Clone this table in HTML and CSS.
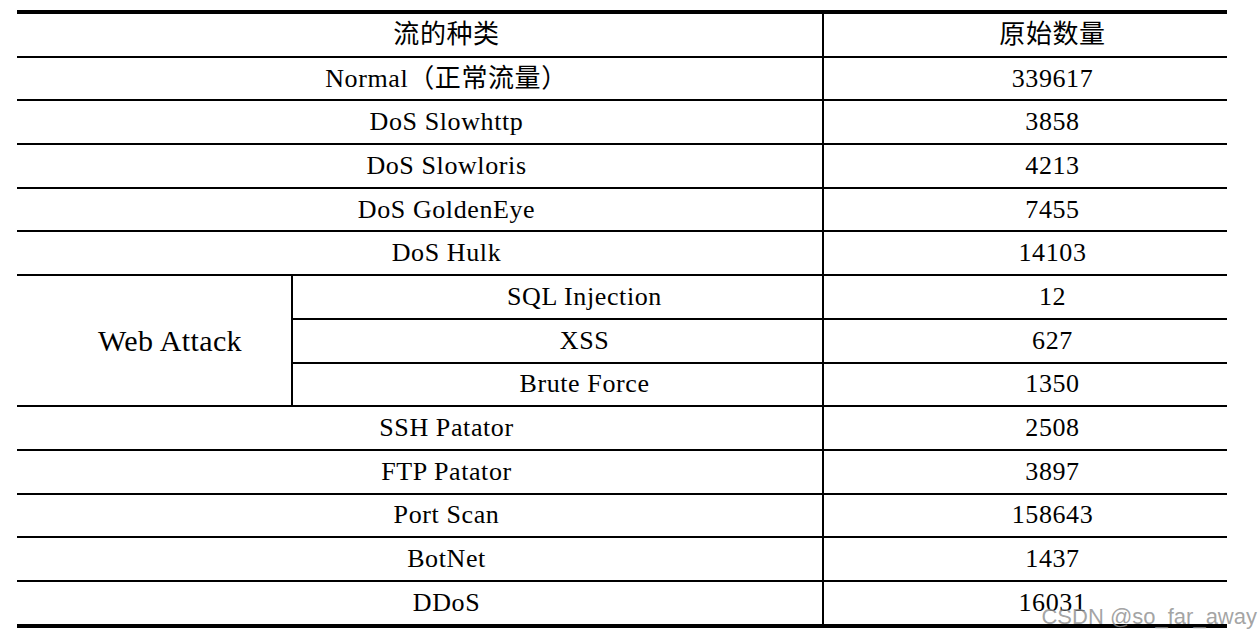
FILE: index.html
```html
<!DOCTYPE html>
<html lang="zh">
<head>
<meta charset="utf-8">
<title>流的种类</title>
<link rel="stylesheet" href="styles.css">
</head>
<body>
<div class="page">
  <div class="grid">
    <div class="cell span2">流的种类</div>
    <div class="cell">原始数量</div>

    <div class="cell span2">Normal（正常流量）</div>
    <div class="cell">339617</div>

    <div class="cell span2">DoS Slowhttp</div>
    <div class="cell">3858</div>

    <div class="cell span2">DoS Slowloris</div>
    <div class="cell">4213</div>

    <div class="cell span2">DoS GoldenEye</div>
    <div class="cell">7455</div>

    <div class="cell span2">DoS Hulk</div>
    <div class="cell">14103</div>

    <div class="cell group">Web Attack</div>
    <div class="cell">SQL Injection</div>
    <div class="cell">12</div>
    <div class="cell">XSS</div>
    <div class="cell">627</div>
    <div class="cell">Brute Force</div>
    <div class="cell">1350</div>

    <div class="cell span2">SSH Patator</div>
    <div class="cell">2508</div>

    <div class="cell span2">FTP Patator</div>
    <div class="cell">3897</div>

    <div class="cell span2">Port Scan</div>
    <div class="cell">158643</div>

    <div class="cell span2">BotNet</div>
    <div class="cell">1437</div>

    <div class="cell span2">DDoS</div>
    <div class="cell">16031</div>
  </div>
  <div class="watermark">CSDN @so_far_away</div>
</div>
</body>
</html>
```

FILE: styles.css
```css
html, body {
  margin: 0;
  padding: 0;
  background: #ffffff;
}

.page {
  position: relative;
  width: 1260px;
  height: 641px;
  padding-top: 10px;
  box-sizing: border-box;
}

.grid {
  margin-left: 17px;
  width: 1210px;
  display: grid;
  grid-template-columns: 274px 529px 403px;
  grid-auto-rows: 41.7px;
  gap: 2px;
  background: #000000;
  border-top: 4px solid #000000;
  border-bottom: 4px solid #000000;
}

.cell {
  background: #ffffff;
  display: flex;
  align-items: center;
  justify-content: center;
  padding-left: 54px;
  font-family: "Liberation Serif", "Noto Sans CJK SC", serif;
  font-size: 26px;
  line-height: 30px;
  letter-spacing: 0.6px;
  color: #000000;
  white-space: nowrap;
}

.span2 {
  grid-column: span 2;
}

.group {
  grid-row: span 3;
  padding-left: 32px;
  font-size: 30px;
  letter-spacing: 0.4px;
}

.watermark {
  position: absolute;
  right: 3px;
  top: 604px;
  font-family: "Liberation Sans", Arial, sans-serif;
  font-size: 22px;
  color: rgba(140, 140, 140, 0.8);
  white-space: nowrap;
}
```
